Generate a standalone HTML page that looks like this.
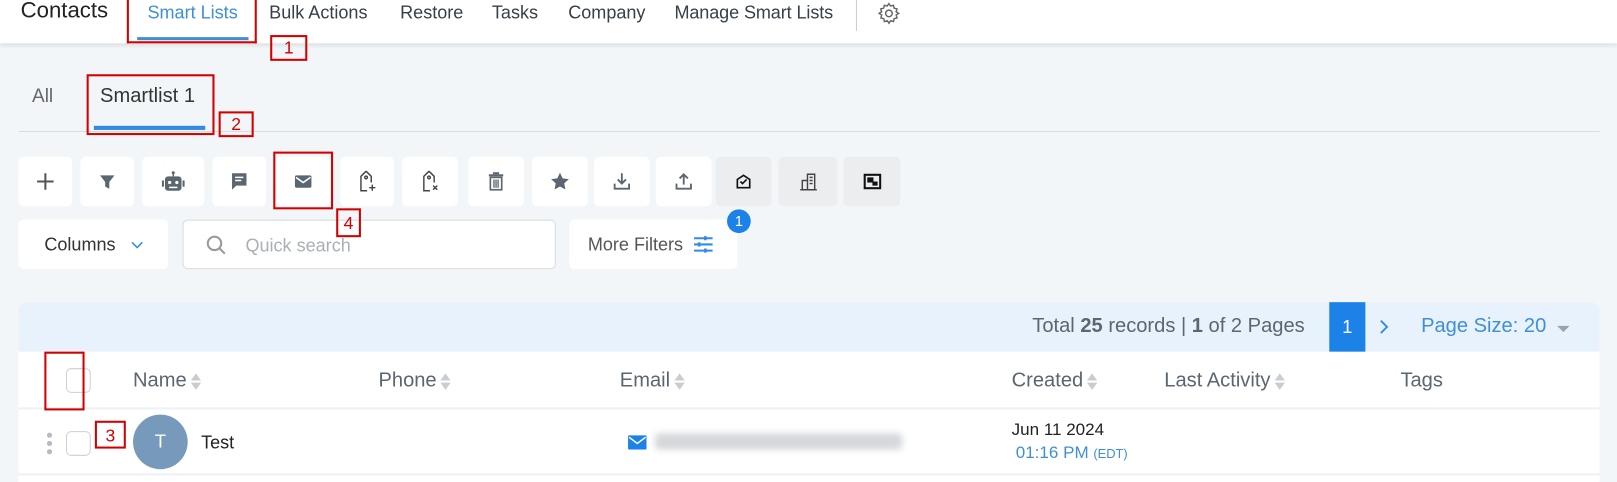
<!DOCTYPE html>
<html><head><meta charset="utf-8">
<style>
*{box-sizing:border-box;margin:0;padding:0}
html,body{width:1617px;height:482px;overflow:hidden;background:#f2f6f9}
#w{width:1568px;height:468px;position:relative;transform:scale(1.03125);transform-origin:0 0;font-family:"Liberation Sans",sans-serif;color:#333}
.a{position:absolute;white-space:nowrap}
.top{left:0;top:0;width:1568px;height:42px;background:#fff;box-shadow:0 2px 4px rgba(0,0,0,.1)}
.nav{top:2px;font-size:17.5px;color:#37404a}
.red{position:absolute;border:2px solid #d40000;z-index:5}
.num{position:absolute;border:2px solid #d40000;color:#d40000;font-size:17px;text-align:center;line-height:22px;background:transparent;z-index:5}
.btn{position:absolute;top:152px;height:48px;background:#fff;border-radius:5px;display:flex;align-items:center;justify-content:center}
.btn.g{background:#ebedef}
.box{position:absolute;top:213px;height:48px;background:#fff;border-radius:5px}
.sort{display:inline-block;width:10px;vertical-align:middle;margin-left:4px}
.th{top:358px;font-size:19.5px;color:#5b6670}
</style></head><body><div id="w">
<div class="a top"></div>
<div class="a" style="left:20px;top:-2px;font-size:21.5px;color:#222">Contacts</div>
<div class="a nav" style="left:143px;color:#3f8fd6">Smart Lists</div>
<div class="a" style="left:133px;top:36px;width:108px;height:3px;background:#3f8fd6"></div>
<div class="a nav" style="left:261px">Bulk Actions</div>
<div class="a nav" style="left:388px">Restore</div>
<div class="a nav" style="left:477px">Tasks</div>
<div class="a nav" style="left:551px">Company</div>
<div class="a nav" style="left:654px;letter-spacing:-.1px">Manage Smart Lists</div>
<div class="a" style="left:830px;top:0;width:1px;height:30px;background:#ccc"></div>
<svg class="a" style="left:850px;top:1px" width="24" height="24" viewBox="0 0 24 24" fill="none" stroke="#666" stroke-width="1.4"><circle cx="12" cy="12" r="3.2"/><path d="M12 2.5l1.6 2.4 2.8-.8.6 2.8 2.8.7-.8 2.8 2.4 1.6-2.4 1.6.8 2.8-2.8.7-.6 2.8-2.8-.8L12 21.5l-1.6-2.4-2.8.8-.6-2.8-2.8-.7.8-2.8L2.5 12l2.4-1.6-.8-2.8 2.8-.7.6-2.8 2.8.8z"/></svg>
<div class="red" style="left:123px;top:0;width:126px;height:42px;border-top:none"></div>
<div class="num" style="left:262px;top:34px;width:36px;height:25px">1</div>

<div class="a" style="left:31px;top:82px;font-size:18.5px;color:#666">All</div>
<div class="a" style="left:97px;top:82px;font-size:19.5px;color:#333">Smartlist 1</div>
<div class="a" style="left:91px;top:122px;width:108px;height:4px;background:#2f8be6"></div>
<div class="a" style="left:18px;top:127px;width:1533px;height:1px;background:#d8dde2"></div>
<div class="red" style="left:84px;top:72px;width:124px;height:59px"></div>
<div class="num" style="left:212px;top:108px;width:34px;height:25px">2</div>

<div class="btn" style="left:18px;width:52px"><svg width="20" height="20"><path d="M10 2v16M2 10h16" stroke="#555" stroke-width="2"/></svg></div>
<div class="btn" style="left:78px;width:52px"><svg width="18" height="18" viewBox="0 0 18 18"><path d="M2 3h14l-5 6.5V16l-4-2V9.5z" fill="#5a6670"/></svg></div>
<div class="btn" style="left:138px;width:60px"><svg width="26" height="22" viewBox="0 0 26 22"><rect x="5" y="6" width="16" height="14" rx="3" fill="#5a6670"/><rect x="2" y="10" width="2" height="6" fill="#5a6670"/><rect x="22" y="10" width="2" height="6" fill="#5a6670"/><circle cx="13" cy="2.5" r="1.5" fill="#5a6670"/><rect x="12.3" y="3" width="1.4" height="3" fill="#5a6670"/><circle cx="9.5" cy="12" r="1.6" fill="#fff"/><circle cx="16.5" cy="12" r="1.6" fill="#fff"/><rect x="9" y="16" width="8" height="1.5" fill="#fff"/></svg></div>
<div class="btn" style="left:206px;width:52px"><svg width="20" height="20" viewBox="0 0 20 20"><path d="M3 2h14v12H7l-4 4z" fill="#5a6670"/><path d="M6 6h8M6 9h6" stroke="#fff" stroke-width="1.5"/></svg></div>
<div class="btn" style="left:268px;width:52px"><svg width="20" height="16" viewBox="0 0 20 16"><rect x="2" y="2" width="16" height="12" rx="1.5" fill="#5a6670"/><path d="M3 4l7 5 7-5" stroke="#fff" stroke-width="1.5" fill="none"/></svg></div>
<div class="btn" style="left:330px;width:52px"><svg width="22" height="24" viewBox="0 0 22 24" fill="none" stroke="#444" stroke-width="1.4"><path d="M10 2l5 5v6M10 2L5 7v14h6"/><circle cx="10" cy="8" r="1.3"/><path d="M16 15v6M13 18h6"/></svg></div>
<div class="btn" style="left:390px;width:54px"><svg width="22" height="24" viewBox="0 0 22 24" fill="none" stroke="#444" stroke-width="1.4"><path d="M10 2l5 5v6M10 2L5 7v14h6"/><circle cx="10" cy="8" r="1.3"/><path d="M14 16l4 4M18 16l-4 4"/></svg></div>
<div class="btn" style="left:454px;width:54px"><svg width="18" height="20" viewBox="0 0 18 20"><rect x="2" y="3" width="14" height="2" fill="#5a6670"/><rect x="6" y="1" width="6" height="2" fill="#5a6670"/><rect x="3.5" y="6" width="11" height="12" fill="none" stroke="#5a6670" stroke-width="1.6"/><path d="M7 8v8M9 8v8M11 8v8" stroke="#5a6670" stroke-width="1.3"/></svg></div>
<div class="btn" style="left:516px;width:54px"><svg width="20" height="20" viewBox="0 0 20 20"><path d="M10 1.5l2.6 5.5 6 .7-4.5 4.1 1.2 6-5.3-3-5.3 3 1.2-6L1.4 7.7l6-.7z" fill="#5a6670"/></svg></div>
<div class="btn" style="left:576px;width:54px"><svg width="20" height="20" viewBox="0 0 20 20" fill="none" stroke="#5a6670" stroke-width="1.8"><path d="M10 2v10M6 8l4 4 4-4M3 12v5h14v-5"/></svg></div>
<div class="btn" style="left:636px;width:54px"><svg width="20" height="20" viewBox="0 0 20 20" fill="none" stroke="#5a6670" stroke-width="1.8"><path d="M10 13V3M6 7l4-4 4 4M3 12v5h14v-5"/></svg></div>
<div class="btn g" style="left:694px;width:54px"><svg width="18" height="18" viewBox="0 0 18 18" fill="none" stroke="#111" stroke-width="1.6"><path d="M3 7l6-4 6 4v8H3z"/><path d="M6 9l2 2 4-4"/></svg></div>
<div class="btn g" style="left:755px;width:57px"><svg width="20" height="20" viewBox="0 0 20 20" fill="none" stroke="#444" stroke-width="1.4"><path d="M2 18h16M4 18V9h5M9 18V3h7v15M11 6h3M11 9h3M11 12h3"/></svg></div>
<div class="btn g" style="left:818px;width:55px"><svg width="20" height="18" viewBox="0 0 20 18"><rect x="2.5" y="2.5" width="15" height="13" fill="none" stroke="#111" stroke-width="2"/><rect x="5" y="5" width="6" height="5" fill="#111"/><rect x="10" y="9" width="5" height="4" fill="#111"/></svg></div>
<div class="red" style="left:265px;top:147px;width:58px;height:56px"></div>
<div class="num" style="left:326px;top:202px;width:24px;height:28px;line-height:26px">4</div>

<div class="box" style="left:18px;width:145px"><span class="a" style="left:25px;top:14px;font-size:17.5px;color:#333">Columns</span><svg class="a" style="left:108px;top:20px" width="14" height="10"><path d="M2 2l5 5 5-5" stroke="#2f8be6" stroke-width="1.5" fill="none"/></svg></div>
<div class="box" style="left:177px;width:362px;border:1px solid #d9dde1;top:213px"><svg class="a" style="left:21px;top:13px" width="22" height="22" viewBox="0 0 22 22" fill="none" stroke="#999" stroke-width="2"><circle cx="9" cy="9" r="6.5"/><path d="M14 14l5 5"/></svg><span class="a" style="left:60px;top:14px;font-size:17.5px;color:#aab0b6">Quick search</span></div>
<div class="box" style="left:552px;width:163px"><span class="a" style="left:18px;top:14px;font-size:17.5px;color:#555">More Filters</span><svg class="a" style="left:120px;top:14px" width="20" height="20" viewBox="0 0 20 20" stroke="#2f8be6" stroke-width="2"><path d="M1 4h18M1 10h18M1 16h18"/><path d="M12 2v4M6 8v4M12 14v4" stroke-width="2.5"/></svg></div>
<div class="a" style="left:705px;top:203px;width:23px;height:23px;border-radius:50%;background:#1d82e8;color:#fff;font-size:14px;text-align:center;line-height:23px">1</div>

<div class="a" style="left:18px;top:293px;width:1533px;height:175px;background:#fff;border-radius:8px 8px 0 0;overflow:hidden">
 <div class="a" style="left:0;top:0;width:1533px;height:48px;background:#e8f2fc"></div>
 <div class="a" style="left:0;top:102px;width:1533px;height:2px;background:#eef1f4"></div>
 <div class="a" style="left:0;top:166px;width:1533px;height:2px;background:#eef1f4"></div>
</div>
<div class="a" style="left:1001px;top:305px;font-size:19.5px;color:#5b6670">Total <b>25</b> records | <b>1</b> of 2 Pages</div>
<div class="a" style="left:1289px;top:293px;width:35px;height:48px;background:#1d82e8;color:#fff;font-size:18px;text-align:center;line-height:48px">1</div>
<svg class="a" style="left:1336px;top:309px" width="12" height="16"><path d="M3 2l6 6-6 6" stroke="#2f8be6" stroke-width="1.8" fill="none"/></svg>
<div class="a" style="left:1378px;top:305px;font-size:19.5px;color:#3f8fd6">Page Size: 20</div>
<svg class="a" style="left:1509px;top:315px" width="14" height="8"><path d="M1 1h12L7 7z" fill="#9aa3ab"/></svg>

<div class="a" style="left:64px;top:357px;width:24px;height:24px;border:1px solid #ccd1d6;border-radius:5px;background:#fff"></div>
<div class="red" style="left:43px;top:341px;width:39px;height:57px"></div>
<div class="a th" style="left:129px">Name<svg class="sort" height="20" viewBox="0 0 10 20"><path d="M5 2l5 7H0zM5 18l5-7H0z" fill="#c9cdd1"/></svg></div>
<div class="a th" style="left:367px">Phone<svg class="sort" height="20" viewBox="0 0 10 20"><path d="M5 2l5 7H0zM5 18l5-7H0z" fill="#c9cdd1"/></svg></div>
<div class="a th" style="left:601px">Email<svg class="sort" height="20" viewBox="0 0 10 20"><path d="M5 2l5 7H0zM5 18l5-7H0z" fill="#c9cdd1"/></svg></div>
<div class="a th" style="left:981px">Created<svg class="sort" height="20" viewBox="0 0 10 20"><path d="M5 2l5 7H0zM5 18l5-7H0z" fill="#c9cdd1"/></svg></div>
<div class="a th" style="left:1129px">Last Activity<svg class="sort" height="20" viewBox="0 0 10 20"><path d="M5 2l5 7H0zM5 18l5-7H0z" fill="#c9cdd1"/></svg></div>
<div class="a th" style="left:1358px">Tags</div>

<svg class="a" style="left:44px;top:418px" width="8" height="24"><circle cx="4" cy="4" r="2.5" fill="#b5bbc1"/><circle cx="4" cy="12" r="2.5" fill="#b5bbc1"/><circle cx="4" cy="20" r="2.5" fill="#b5bbc1"/></svg>
<div class="a" style="left:64px;top:418px;width:24px;height:24px;border:1px solid #ccd1d6;border-radius:5px;background:#fff"></div>
<div class="num" style="left:92px;top:408px;width:30px;height:27px;line-height:25px">3</div>
<div class="a" style="left:129px;top:402px;width:53px;height:53px;border-radius:50%;background:#7799bb;color:#fff;font-size:18px;text-align:center;line-height:53px">T</div>
<div class="a" style="left:195px;top:419px;font-size:17.5px;color:#222">Test</div>
<svg class="a" style="left:609px;top:422px" width="18" height="14"><rect x="0" y="0" width="18" height="14" rx="1.5" fill="#1d82e8"/><path d="M1 2l8 6 8-6" stroke="#fff" stroke-width="1.4" fill="none"/></svg>
<div class="a" style="left:635px;top:420px;width:240px;height:16px;background:#d5d8db;filter:blur(3px);border-radius:4px"></div>
<div class="a" style="left:981px;top:408px;font-size:16.5px;color:#222">Jun 11 2024</div>
<div class="a" style="left:985px;top:430px;font-size:16.5px;color:#3f8fd6">01:16 PM <span style="font-size:12.5px">(EDT)</span></div>
</div></body></html>
